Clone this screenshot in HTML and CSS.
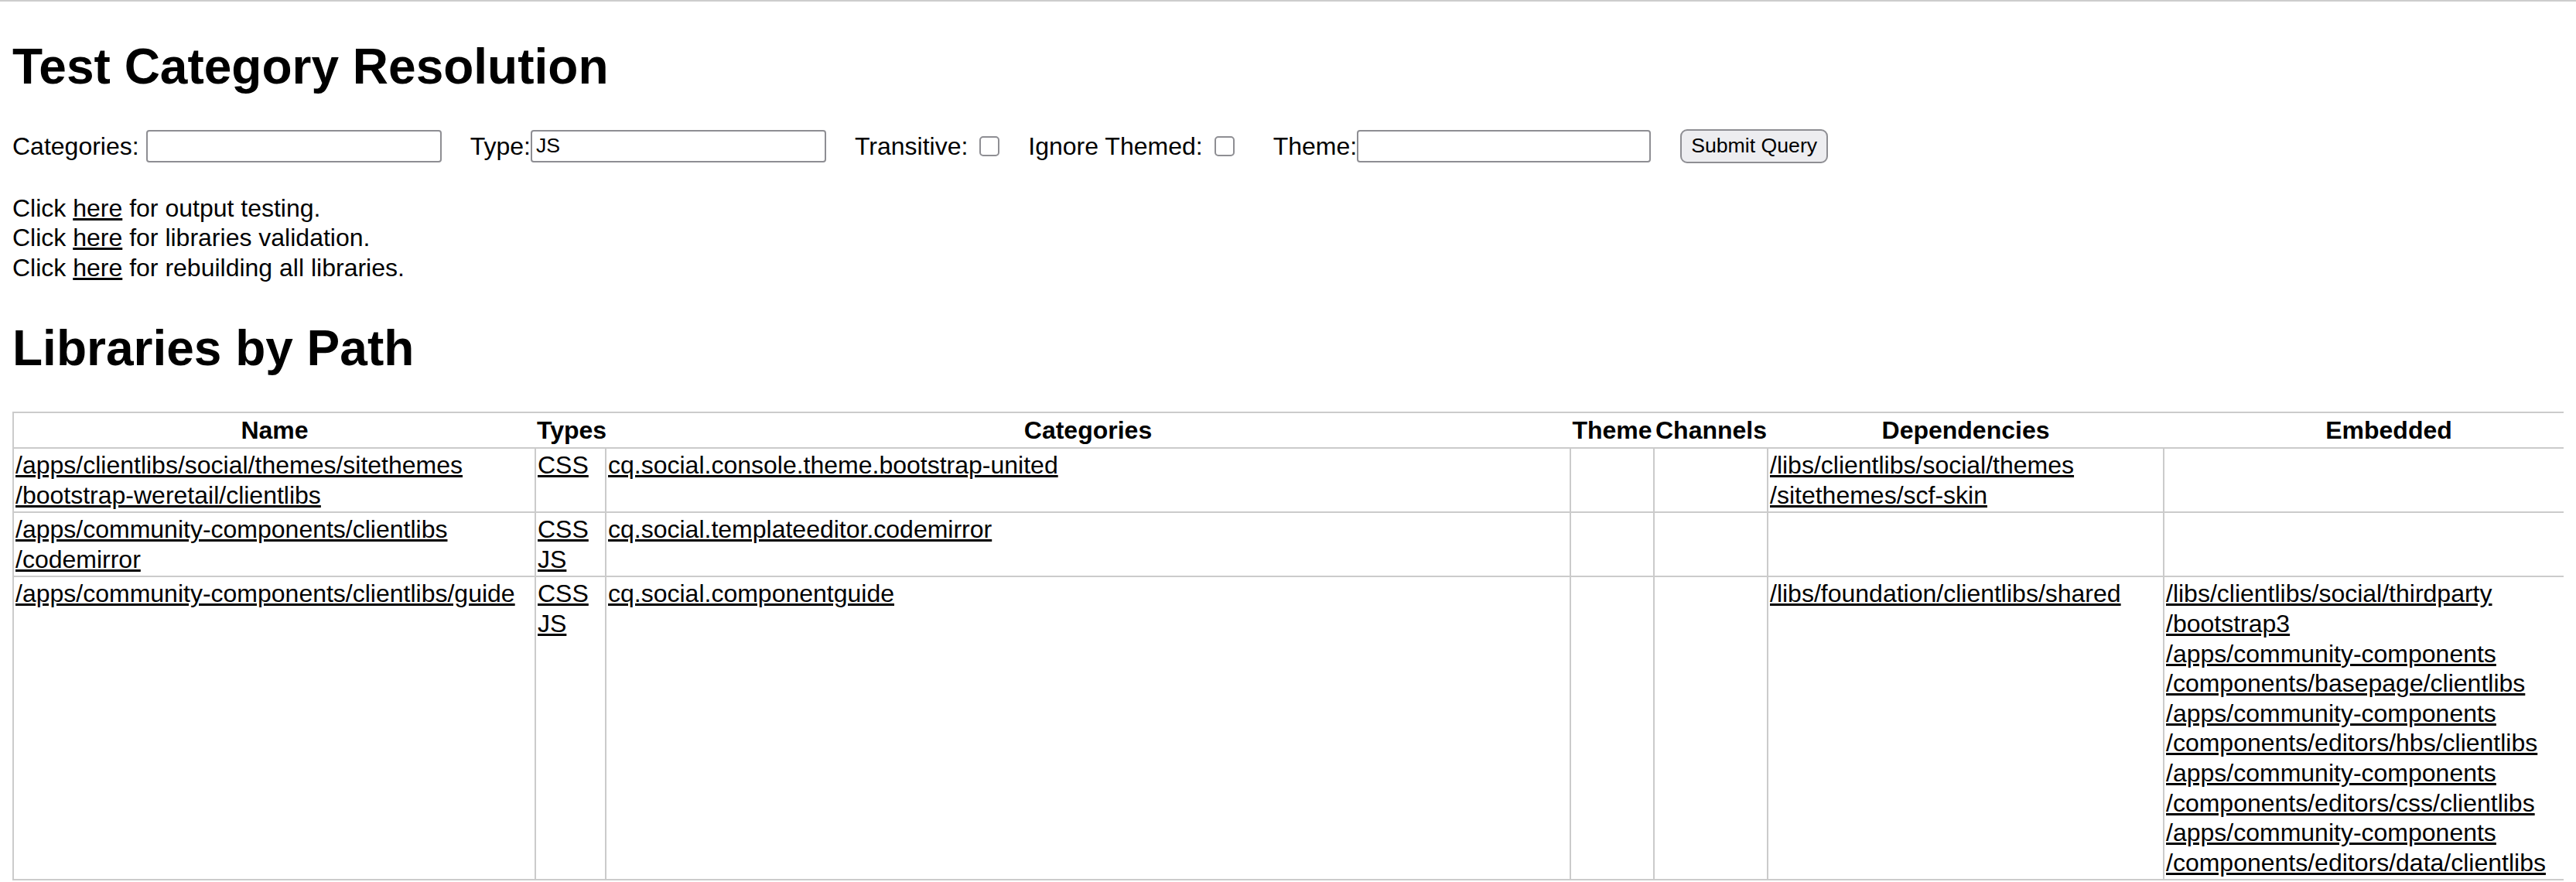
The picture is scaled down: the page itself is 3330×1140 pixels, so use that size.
FILE: index.html
```html
<!DOCTYPE html>
<html lang="en">

<head>
    <meta charset="UTF-8">
    <meta name="viewport" content="width=device-width, initial-scale=1.0">
    <title>Test Category Resolution</title>
    <link rel="stylesheet" href="styles.css">
</head>

<body>
    <h1 class="title">Test Category Resolution</h1>

    <form class="query">
        <label class="field">Categories:<input class="text-input gap" type="text" name="categories"></label>
        <label class="field">Type:<input class="text-input" type="text" name="type" value="JS"></label>
        <label class="field">Transitive:<input class="check" type="checkbox" name="trans"></label>
        <label class="field">Ignore Themed:<input class="check" type="checkbox" name="ignoreThemed"></label>
        <label class="field wide">Theme:<input class="text-input theme-input" type="text" name="theme"></label>
        <input class="field submit" type="submit" value="Submit Query">
    </form>

    <p class="links">
        Click <a href="#">here</a> for output testing.<br>
        Click <a href="#">here</a> for libraries validation.<br>
        Click <a href="#">here</a> for rebuilding all libraries.
    </p>

    <h1 class="title second">Libraries by Path</h1>

    <table class="libs">
        <colgroup>
            <col class="c-name">
            <col class="c-types">
            <col class="c-cats">
            <col class="c-theme">
            <col class="c-channels">
            <col class="c-deps">
            <col class="c-embed">
        </colgroup>
        <tr>
            <th>Name</th>
            <th>Types</th>
            <th>Categories</th>
            <th>Theme</th>
            <th>Channels</th>
            <th>Dependencies</th>
            <th>Embedded</th>
        </tr>
        <tr>
            <td><a href="#">/apps/clientlibs/social/themes/sitethemes<br>/bootstrap-weretail/clientlibs</a></td>
            <td><a href="#">CSS</a></td>
            <td><a href="#">cq.social.console.theme.bootstrap-united</a></td>
            <td></td>
            <td></td>
            <td><a href="#">/libs/clientlibs/social/themes<br>/sitethemes/scf-skin</a></td>
            <td></td>
        </tr>
        <tr>
            <td><a href="#">/apps/community-components/clientlibs<br>/codemirror</a></td>
            <td><a href="#">CSS</a><br><a href="#">JS</a></td>
            <td><a href="#">cq.social.templateeditor.codemirror</a></td>
            <td></td>
            <td></td>
            <td></td>
            <td></td>
        </tr>
        <tr>
            <td><a href="#">/apps/community-components/clientlibs/guide</a></td>
            <td><a href="#">CSS</a><br><a href="#">JS</a></td>
            <td><a href="#">cq.social.componentguide</a></td>
            <td></td>
            <td></td>
            <td><a href="#">/libs/foundation/clientlibs/shared</a></td>
            <td>
                <a href="#">/libs/clientlibs/social/thirdparty<br>/bootstrap3</a><br>
                <a href="#">/apps/community-components<br>/components/basepage/clientlibs</a><br>
                <a href="#">/apps/community-components<br>/components/editors/hbs/clientlibs</a><br>
                <a href="#">/apps/community-components<br>/components/editors/css/clientlibs</a><br>
                <a href="#">/apps/community-components<br>/components/editors/data/clientlibs</a>
            </td>
        </tr>
    </table>
</body>

</html>
```

FILE: styles.css
```css
html {
    border-top: 2px solid #cdcdcd;
    overflow: hidden;
    background: #fff;
}

body {
    margin: 0 16px;
    font-family: "Liberation Sans", Arial, sans-serif;
    font-size: 32px;
    line-height: 38.6px;
    color: #000;
}

a {
    color: #000;
    text-decoration: underline;
}

.title {
    font-size: 64px;
    line-height: 76.8px;
    font-weight: bold;
    margin: 46.4px 0 41.8px 0;
}

.title.second {
    margin: 47px 0 42.8px 0;
}

/* form row */
.query {
    display: flex;
    align-items: center;
    height: 44px;
}

.field {
    display: flex;
    align-items: center;
    margin-left: 37px;
}

.field:first-child {
    margin-left: 0;
}

.field.wide {
    margin-left: 50px;
}

.text-input {
    box-sizing: border-box;
    width: 382px;
    height: 42px;
    margin: 0;
    padding: 0 5px;
    border: 2px solid #8e8e93;
    border-radius: 4px;
    background: #fff;
    font-family: "Liberation Sans", Arial, sans-serif;
    font-size: 26.67px;
    color: #000;
    outline: none;
}

.text-input.gap {
    margin-left: 9px;
}

.theme-input {
    width: 380px;
}

.check {
    appearance: none;
    -webkit-appearance: none;
    box-sizing: border-box;
    width: 26px;
    height: 26px;
    margin: 0 0 0 15px;
    border: 2px solid #8e8e93;
    border-radius: 5px;
    background: #fff;
}

.submit {
    box-sizing: border-box;
    height: 44px;
    padding: 0 12px;
    border: 2px solid #8e8e93;
    border-radius: 9px;
    background: #ededf0;
    font-family: "Liberation Sans", Arial, sans-serif;
    font-size: 26.67px;
    color: #000;
    margin-left: 38px;
}

.links {
    margin: 38.6px 0 0 0;
}

/* libraries table */
.libs {
    table-layout: fixed;
    width: 3363px;
    border-collapse: collapse;
    border: 2px solid #cbcbcb;
    white-space: nowrap;
}

.libs th {
    padding: 3px 2px 2.5px;
    font-weight: bold;
    text-align: center;
    border: none;
}

.libs td {
    padding: 2px;
    border: 2px solid #cbcbcb;
    vertical-align: top;
    overflow: hidden;
}

.c-name {
    width: 675px;
}

.c-types {
    width: 91px;
}

.c-cats {
    width: 1247px;
}

.c-theme {
    width: 108px;
}

.c-channels {
    width: 147px;
}

.c-deps {
    width: 512px;
}

.c-embed {
    width: 583px;
}
```
